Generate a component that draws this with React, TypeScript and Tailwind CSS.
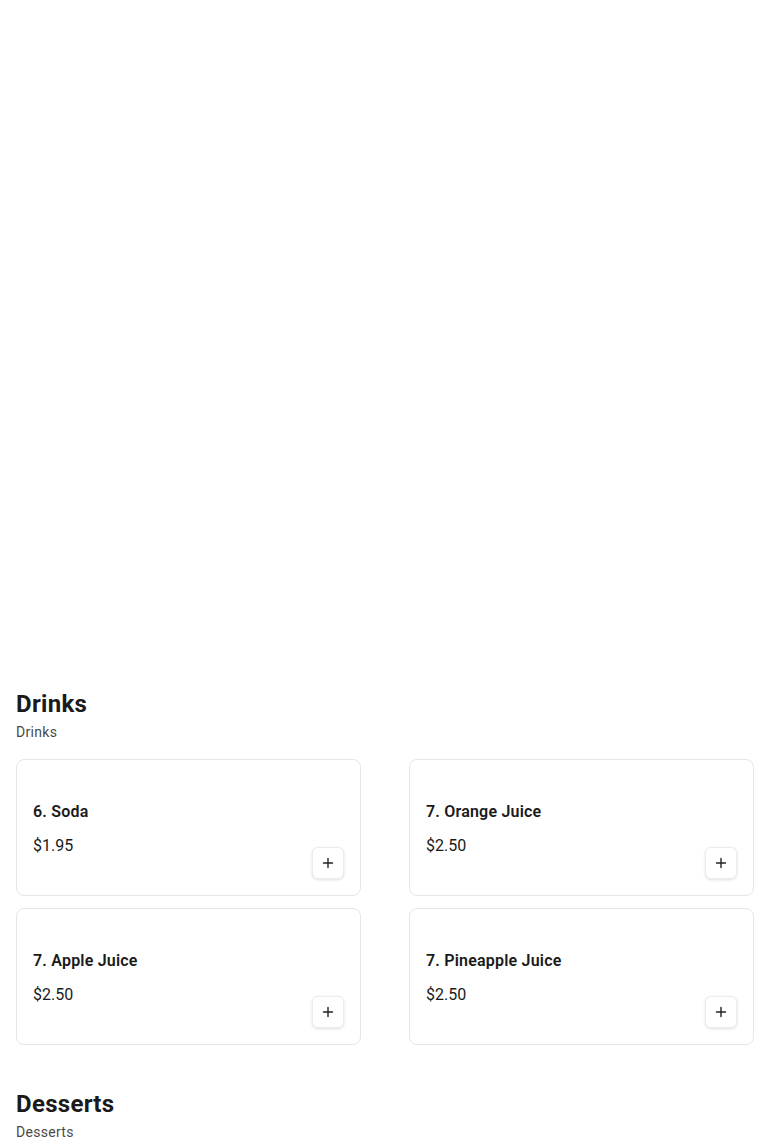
import React from 'react';

interface MenuItem {
  id: number;
  label: string;
  price: string;
}

const drinks: MenuItem[] = [
  { id: 1, label: '6. Soda', price: '$1.95' },
  { id: 2, label: '7. Orange Juice', price: '$2.50' },
  { id: 3, label: '7. Apple Juice', price: '$2.50' },
  { id: 4, label: '7. Pineapple Juice', price: '$2.50' },
];

function PlusIcon() {
  return (
    <svg width="12" height="12" viewBox="0 0 12 12" fill="none" stroke="#222" strokeWidth="1.4" strokeLinecap="round">
      <path d="M6 1.5v9M1.5 6h9" />
    </svg>
  );
}

function ItemCard({ item }: { item: MenuItem }) {
  return (
    <div className="border border-[#e6e6e6] rounded-lg p-4 bg-white">
      <div className="h-[24px]" />
      <h3 className="text-base leading-6 font-semibold text-[#1a1a1a] tracking-[0.2px]">{item.label}</h3>
      <p className="mt-[10px] text-base leading-6 text-[#1a1a1a]">{item.price}</p>
      <div className="flex justify-end -mt-[11px]">
        <button
          type="button"
          className="w-8 h-8 flex items-center justify-center rounded-md bg-white border border-[#ececec] shadow-[0_1px_3px_rgba(0,0,0,0.12)]"
        >
          <PlusIcon />
        </button>
      </div>
    </div>
  );
}

function Section({ title, subtitle, items }: { title: string; subtitle: string; items: MenuItem[] }) {
  return (
    <section>
      <h2 className="text-2xl leading-8 font-bold text-[#1a1a1a] tracking-[0.3px]">{title}</h2>
      <p className="mt-[2px] text-sm leading-5 text-[#4a4a4a] tracking-[0.3px]">{subtitle}</p>
      {items.length > 0 && (
        <div className="mt-[17px] grid grid-cols-2 gap-x-12 gap-y-3">
          {items.map((item) => (
            <ItemCard key={item.id} item={item} />
          ))}
        </div>
      )}
    </section>
  );
}

export default function App() {
  return (
    <div className="min-h-screen bg-white px-4 font-['Roboto',_'Liberation_Sans',_sans-serif]">
      {/* content above is scrolled out / empty */}
      <div className="h-[688px]" />
      <Section title="Drinks" subtitle="Drinks" items={drinks} />
      <div className="mt-[43px]">
        <Section title="Desserts" subtitle="Desserts" items={[]} />
      </div>
    </div>
  );
}
